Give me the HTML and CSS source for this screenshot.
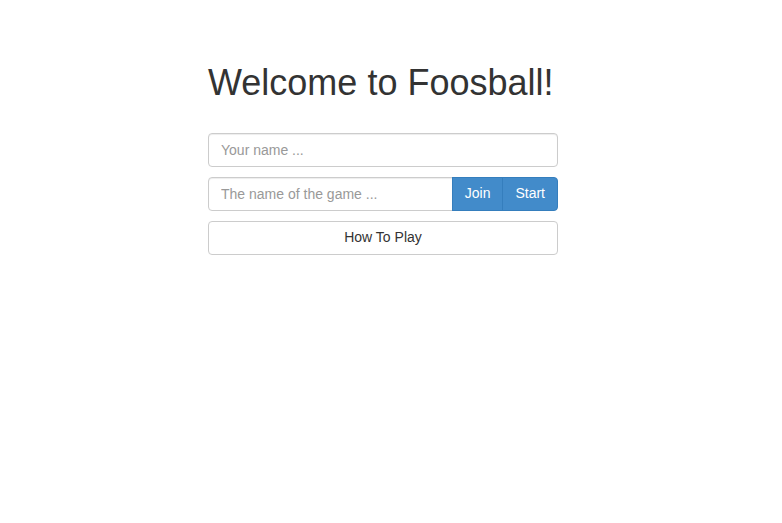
FILE: index.html
```html
<!DOCTYPE html>
<html>
<head>
<meta charset="utf-8">
<link rel="stylesheet" href="styles.css">
</head>
<body>
<div class="page">
  <div class="panel">
    <h1 class="title">Welcome to Foosball!</h1>
    <input class="field" type="text" placeholder="Your name ...">
    <div class="group">
      <input class="field field-join" type="text" placeholder="The name of the game ...">
      <button class="btn btn-primary btn-mid">Join</button>
      <button class="btn btn-primary btn-last">Start</button>
    </div>
    <button class="btn btn-default btn-block">How To Play</button>
  </div>
</div>
</body>
</html>
```
FILE: styles.css
```css
* { box-sizing: border-box; }
html, body { margin: 0; padding: 0; background: #fff; }
body {
  font-family: "Liberation Sans", Arial, sans-serif;
  font-size: 14px;
  line-height: 1.428571;
  color: #333;
}
.page {
  padding: 43px 16px 0 0;
}
.panel {
  width: 350px;
  margin: 0 auto;
  display: flex;
  flex-direction: column;
  gap: 10px;
}
.title {
  font-family: "Liberation Sans", Arial, sans-serif;
  font-size: 36px;
  font-weight: 500;
  line-height: 1.1;
  margin: 20px 0 20px;
  color: #333;
}
.field {
  display: block;
  width: 100%;
  height: 34px;
  padding: 6px 12px;
  font-family: inherit;
  font-size: 14px;
  color: #555;
  background: #fff;
  border: 1px solid #ccc;
  border-radius: 4px;
  box-shadow: inset 0 1px 1px rgba(0,0,0,0.075);
  outline: none;
}
.field::placeholder { color: #999; }
.group {
  display: flex;
}
.field-join {
  flex: 1;
  min-width: 0;
  border-radius: 4px 0 0 4px;
}
.btn {
  font-family: inherit;
  font-size: 14px;
  line-height: 1.428571;
  height: 34px;
  padding: 6px 12px;
  border: 1px solid transparent;
  cursor: pointer;
  white-space: nowrap;
}
.btn-primary {
  color: #fff;
  background: #428bca;
  border-color: #357ebd;
}
.btn-mid {
  border-radius: 0;
  margin-left: -1px;
}
.btn-last {
  border-radius: 0 4px 4px 0;
  margin-left: -1px;
}
.btn-default {
  color: #333;
  background: #fff;
  border-color: #ccc;
  border-radius: 4px;
}
.btn-block {
  display: block;
  width: 100%;
}
```
